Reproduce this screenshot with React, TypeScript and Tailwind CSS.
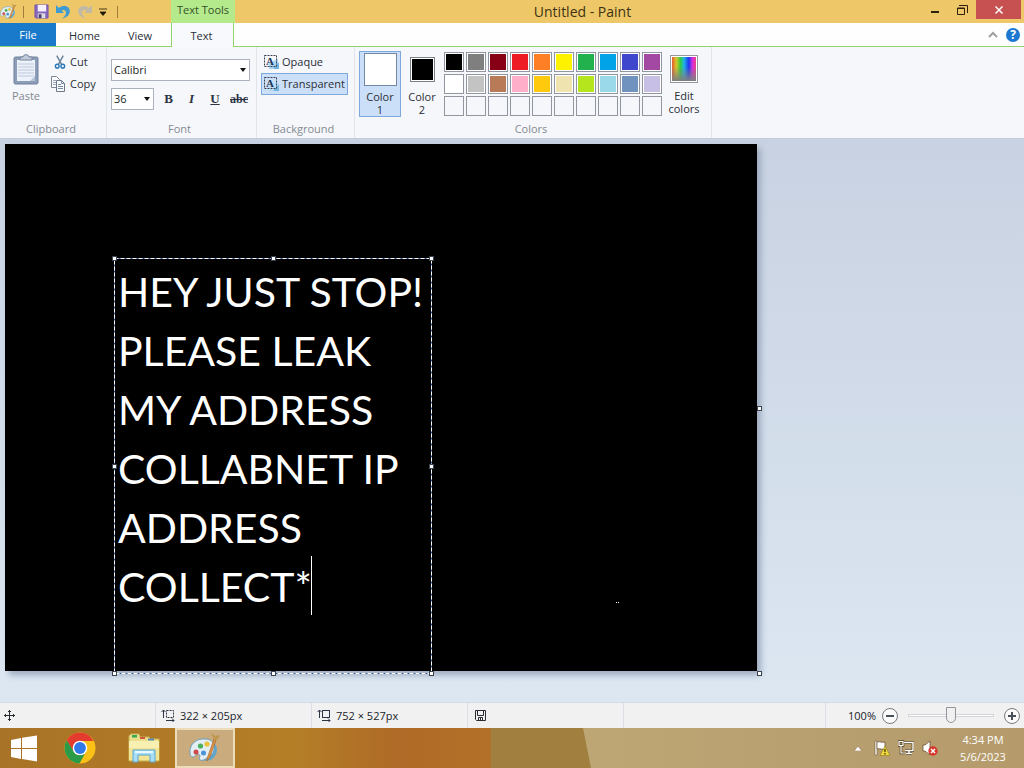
import React from "react";

const swatchRows: string[][] = [
  ["#000000", "#7f7f7f", "#880015", "#ed1c24", "#ff7f27", "#fff200", "#22b14c", "#00a2e8", "#3f48cc", "#a349a4"],
  ["#ffffff", "#c3c3c3", "#b97a57", "#ffaec9", "#ffc90e", "#efe4b0", "#b5e61d", "#99d9ea", "#7092be", "#c8bfe7"],
  ["", "", "", "", "", "", "", "", "", ""],
];

function Palette({ size }: { size: number }) {
  return (
    <svg width={size} height={size} viewBox="0 0 32 32" aria-hidden="true">
      <path d="M22 9c8 4 8 13 0 19l-8 1c8-3 10-11 8-20z" fill="#5fa6cc" />
      <path d="M1 21C0 12 8 6 16 7c8 0 10 5 9 11-1 4-3 6-7 8-3 2-5 3-7 2-2-2 2-5-2-6-2-1-3 3-5 3-2 0-3-2-3-4z" fill="#e3eef3" stroke="#6c9fbe" />
      <circle cx="7" cy="20" r="2.500" fill="#cf4a4a" />
      <circle cx="11.500" cy="14" r="2.600" fill="#4cae5a" />
      <circle cx="18" cy="12" r="2.600" fill="#e8c23a" />
      <circle cx="14.500" cy="21" r="2.500" fill="#4b93d6" />
      <path d="M18 27L25 7l2 1-6 17-3 4z" fill="#df9448" stroke="#a8672b" strokeWidth="0.700" />
      <path d="M25 8c-1-4-2-4-3-7 3 2 4 3 5 3l4-1c-1 2-1 4-4 5z" fill="#bf974e" />
    </svg>
  );
}

function FloppyIcon() {
  return (
    <svg width="15" height="15" viewBox="0 0 16 16" aria-hidden="true">
      <path d="M1 1h14v14H2l-1-1z" fill="#8866bd" stroke="#7455a8" />
      <path d="M4 1h9v7H4z" fill="#f5f0fb" />
      <path d="M4 10h8v5H4z" fill="#d9dde4" />
      <path d="M5 11h3v4H5z" fill="#4a3b6e" />
    </svg>
  );
}

function TurnArrow({ color, flip }: { color: string; flip?: boolean }) {
  return (
    <svg width="16" height="16" viewBox="0 0 16 16" aria-hidden="true" className={flip ? "-scale-x-100" : ""}>
      <path d="M1 1v8h8L6.500 6.500c2-1.300 4.500-.5 4.500 2 0 2.500-1.500 4.200-4 6 4.500-.7 7.800-3.500 7.800-7.500C14.800 2 8 .3 4 4z" fill={color} />
    </svg>
  );
}

function PasteIcon() {
  return (
    <svg width="28" height="32" viewBox="0 0 28 32" aria-hidden="true">
      <rect x="2" y="3" width="24" height="27" rx="1.500" fill="#8c9db8" stroke="#70819f" />
      <path d="M5 6h18v21H5z" fill="#edf1f9" />
      <path d="M6 10h16M6 13h16M6 16h16M6 19h16M6 22h16" stroke="#bdc9de" />
      <path d="M8 6V3h3c0-3 6-3 6 0h3v3z" fill="#c2cbd9" stroke="#74839c" />
      <path d="M18 27l5-5v5z" fill="#b7c5dc" />
    </svg>
  );
}

function CutIcon() {
  return (
    <svg width="12" height="16" viewBox="0 0 13 16" fill="none" aria-hidden="true">
      <path d="M3 1l5.500 10M10 1L4.500 11" stroke="#6f8497" strokeWidth="1.600" />
      <circle cx="3.500" cy="12.500" r="2" stroke="#2878b8" strokeWidth="1.500" />
      <circle cx="9.500" cy="12.500" r="2" stroke="#2878b8" strokeWidth="1.500" />
    </svg>
  );
}

function CopyIcon() {
  return (
    <svg width="16" height="16" viewBox="0 0 16 16" aria-hidden="true">
      <path d="M1.500.5h5l3 3v8h-8z" fill="#fafcff" stroke="#7c8796" />
      <path d="M3 4.500h3M3 6.500h4M3 8.500h4" stroke="#9aa9bd" />
      <path d="M6.500 4.500h5l3 3v8h-8z" fill="#fafcff" stroke="#6d7887" />
      <path d="M11.500 4.500v3h3M8 8.500h3M8 10.500h5M8 12.500h5" stroke="#7590ad" fill="none" />
    </svg>
  );
}

function TextModeIcon({ opaque }: { opaque?: boolean }) {
  return (
    <svg width="17" height="16" viewBox="0 0 17 16" aria-hidden="true">
      <path d="M6 15V9l9-4v10z" fill={opaque ? "#a9d3f3" : "#b9dbf5"} />
      <path d="M10 15l6-7v7z" fill="#6fb4e4" />
      <rect x="1.500" y="1.500" width="12" height="11" fill="none" stroke="#36404e" strokeDasharray="2 1" />
      <text x="3" y="11" fontFamily="Liberation Serif, serif" fontWeight="700" fontSize="11" fill="#1e3557">A</text>
    </svg>
  );
}

function Arrow() {
  return (
    <svg width="6" height="4" viewBox="0 0 6 4" aria-hidden="true" className="pointer-events-none absolute right-1 top-1/2 -translate-y-1/2">
      <path d="M0 0h6L3 4z" fill="#111" />
    </svg>
  );
}

function RibbonGroup({ label, width, children }: { label: string; width: string; children: React.ReactNode }) {
  return (
    <section aria-label={label} className={`flex shrink-0 flex-col border-r border-[#e1e4ea] pb-px ${width}`}>
      <div className="flex flex-1 items-start">{children}</div>
      <div className="h-4 pr-1 text-center leading-4 text-[#858a93]">{label}</div>
    </section>
  );
}

function Handle({ place }: { place: string }) {
  return <span className={`absolute size-[5px] border border-[#3c4350] bg-white ${place}`} />;
}

function SizeIcon({ dashed }: { dashed?: boolean }) {
  return (
    <svg width="14" height="13" viewBox="0 0 14 13" fill="none" stroke="#2d3647" aria-hidden="true">
      <path d="M2.500 9V1M.5 3l2-2 2 2" />
      <rect x="5.500" y="1.500" width="7" height="7" strokeDasharray={dashed ? "2 1" : undefined} />
      <path d="M5 11.500h8M11 9.500l2 2-2 2" />
    </svg>
  );
}

function Chrome() {
  return (
    <svg width="32" height="32" viewBox="0 0 32 32" aria-hidden="true">
      <circle cx="16" cy="16" r="15.500" fill="#fbc116" />
      <path d="M16 .5A15.500 15.500 0 0 0 2.600 8.200L9.800 20 16 9h13.500A15.500 15.500 0 0 0 16 .5z" fill="#e33b2e" />
      <path d="M2.600 8.200A15.500 15.500 0 0 0 15.500 31.500L22 19.500 16 23c-3 0-5-1-6.200-3.500z" fill="#2b9b48" />
      <circle cx="16" cy="16" r="7.300" fill="#fff" />
      <circle cx="16" cy="16" r="5.900" fill="#2f79e8" />
    </svg>
  );
}

function Explorer() {
  return (
    <svg width="32" height="30" viewBox="0 0 32 30" aria-hidden="true">
      <path d="M1 3l2-2h8l1 3h9l1 2h9v22H1z" fill="#eadf8c" stroke="#c9b452" />
      <path d="M4 2h5v2.500H4z" fill="#35a853" />
      <path d="M12 4h5v2h-5z" fill="#d6543d" />
      <path d="M20 5.500h6v2h-6z" fill="#568bb9" />
      <path d="M1 8h30v19H1z" fill="#f8f0b0" />
      <path d="M1 15h30v12H1z" fill="#f1e595" />
      <path d="M5 29V17h22v12h-5v-7H10v7z" fill="#a9dcf5" stroke="#5aa5d3" />
      <path d="M7 19h18" stroke="#e8f8ff" strokeWidth="2" />
    </svg>
  );
}

export default function App() {
  return (
    <div className="flex min-h-screen flex-col overflow-hidden bg-[#dce6f1] font-['Open_Sans','Noto_Sans',sans-serif] text-[11px] leading-4 text-[#2b2f36]">
      <header className="flex h-[23px] items-start bg-[#eec868]">
        <div className="flex h-[23px] w-[171px] items-center">
          <Palette size={17} />
          <span className="ml-1.5 h-3 w-px bg-[#a07c3a]" />
          <button aria-label="Save" className="ml-2.5"><FloppyIcon /></button>
          <button aria-label="Undo" className="ml-1.5"><TurnArrow color="#3c9bd3" /></button>
          <button aria-label="Redo" className="ml-1.5"><TurnArrow color="#c0b9a6" flip /></button>
          <button aria-label="Customize toolbar" className="ml-1.5">
            <svg width="8" height="8" viewBox="0 0 8 8"><path d="M0 1h8M1 4h6L4 7.500z" stroke="#1c1607" fill="#1c1607" strokeWidth="0.800" /></svg>
          </button>
          <span className="ml-2.5 h-3 w-px bg-[#a07c3a]" />
        </div>
        <div className="h-[23px] w-16 bg-[#b4ea8c] pt-0.5 text-center text-[#33502a]">Text Tools</div>
        <h1 className="flex-1 pl-2 text-center text-[14px] leading-[23px] text-[#3d3213]">Untitled - Paint</h1>
        <div className="flex w-[102px] items-start">
          <button aria-label="Minimize" className="flex h-5 w-[26px] items-center justify-center pt-1"><span className="h-0.5 w-2 bg-[#30200c]" /></button>
          <button aria-label="Restore" className="flex h-5 w-7 items-center justify-center">
            <svg width="11" height="10" viewBox="0 0 11 10" fill="none" stroke="#30200c"><path d="M2 .5h8.500V8" /><path d="M.5 3h7v6.500h-7z" /><path d="M.5 3.500h7" /></svg>
          </button>
          <button aria-label="Close" className="flex h-[19px] w-[45px] items-center justify-center bg-[#c75050]">
            <svg width="8" height="8" viewBox="0 0 8 8"><path d="M.5.5l7 7M7.500.5l-7 7" stroke="#fff" strokeWidth="1.500" /></svg>
          </button>
        </div>
      </header>

      <nav aria-label="Ribbon tabs" className="flex h-6 border-b border-[#92d36e] bg-[#fefefe] leading-[18px]">
        <button className="h-[23px] w-14 bg-[#1979ca] text-white">File</button>
        <button className="w-[57px] pt-0.5">Home</button>
        <button className="w-[58px] pr-1 pt-0.5">View</button>
        <button className="h-6 w-[63px] border-x border-[#92d36e] bg-[#f7f9fc] pr-0.5 pt-0.5">Text</button>
        <div className="flex flex-1 items-center justify-end gap-2 pr-1">
          <button aria-label="Collapse ribbon"><svg width="10" height="7" viewBox="0 0 10 7" fill="none"><path d="M1 6l4-4 4 4" stroke="#a0a0a0" strokeWidth="2" /></svg></button>
          <button aria-label="Help" className="size-3.5 rounded-full bg-[#1c78d0] text-xs font-bold leading-[14px] text-white">?</button>
        </div>
      </nav>

      <div className="flex h-[92px] border-b border-[#c3ccda] bg-[#f5f7fb]">
        <RibbonGroup label="Clipboard" width="w-[107px]">
          <button className="ml-2 mt-[7px] flex w-9 flex-col items-center gap-0.5 text-[#82878f]"><PasteIcon />Paste</button>
          <div className="ml-1.5 mt-[7px] flex flex-col items-start gap-1.5">
            <button className="flex h-4 items-center gap-1 pl-1"><CutIcon />Cut</button>
            <button className="flex h-4 items-center gap-1"><CopyIcon />Copy</button>
          </div>
        </RibbonGroup>
        <RibbonGroup label="Font" width="w-[150px]">
          <div className="ml-1 mt-3 flex flex-col gap-[7px]">
            <div className="relative w-[139px]">
              <select aria-label="Font family" className="h-[22px] w-full appearance-none border border-[#abb3c0] bg-white px-0.5 text-[#1c1f24]"><option>Calibri</option></select>
              <Arrow />
            </div>
            <div className="flex items-center">
              <div className="relative w-[43px]">
                <select aria-label="Font size" className="h-[22px] w-full appearance-none border border-[#abb3c0] bg-white px-0.5 text-[#1c1f24]"><option>36</option></select>
                <Arrow />
              </div>
              <div className="ml-[3px] flex font-['Liberation_Serif',serif] text-[13px] font-bold text-[#2c3344]">
                <button aria-label="Bold" className="w-[23px]">B</button>
                <button aria-label="Italic" className="w-[23px] italic">I</button>
                <button aria-label="Underline" className="w-6 underline">U</button>
                <button aria-label="Strikethrough" className="w-6 text-xs line-through">abc</button>
              </div>
            </div>
          </div>
        </RibbonGroup>
        <RibbonGroup label="Background" width="w-[98px]">
          <div className="ml-1 mt-1 flex w-[87px] flex-col">
            <button className="flex h-[22px] items-center gap-0.5 border border-transparent pl-px"><TextModeIcon opaque />Opaque</button>
            <button aria-pressed="true" className="flex h-[22px] items-center gap-0.5 border border-[#7ea9dc] bg-[#cbe0f8] pl-px"><TextModeIcon />Transparent</button>
          </div>
        </RibbonGroup>
        <RibbonGroup label="Colors" width="w-[357px]">
          <button aria-pressed="true" className="ml-1 mt-1 flex h-[66px] w-[42px] flex-col items-center border border-[#7ea9dc] bg-[#cbe0f8] pt-px leading-[13px]">
            <span className="mb-1 size-[33px] border border-[#7187a5] bg-white" />Color<br />1
          </button>
          <button className="mt-1 flex h-[66px] w-[42px] flex-col items-center pt-1.5 leading-[13px]">
            <span className="mb-2 size-[25px] border border-[#7b7f86] bg-white p-px"><span className="block size-full bg-black" /></span>Color<br />2
          </button>
          <div className="ml-px mt-[5px] flex flex-col gap-0.5">
            {swatchRows.map((row, r) => (
              <div key={r} className="flex gap-0.5">
                {row.map((color, c) => (
                  <button key={c} aria-label={color || "Empty color"} className="size-5 border border-[#9196a0]">
                    {color && <span className="block size-[18px] border border-white" style={{ backgroundColor: color }} />}
                  </button>
                ))}
              </div>
            ))}
          </div>
          <button className="ml-0.5 mt-1 flex w-10 flex-col items-center pt-1 leading-[13px]">
            <span className="mb-1.5 size-7 border border-[#94979c] bg-white p-px">
              <svg width="24" height="24" viewBox="0 0 22 22" aria-hidden="true">
                <defs>
                  <linearGradient id="hue"><stop offset="0" stopColor="#e85a31" /><stop offset=".18" stopColor="#d7c629" /><stop offset=".35" stopColor="#32cd40" /><stop offset=".5" stopColor="#20b4e5" /><stop offset=".7" stopColor="#1e35ee" /><stop offset=".85" stopColor="#d52bdf" /><stop offset="1" stopColor="#eb3f86" /></linearGradient>
                  <linearGradient id="fade" x2="0" y2="1"><stop offset=".4" stopColor="#808080" stopOpacity="0" /><stop offset="1" stopColor="#808080" /></linearGradient>
                </defs>
                <path d="M0 0h22v22H0z" fill="url(#hue)" /><path d="M0 0h22v22H0z" fill="url(#fade)" />
              </svg>
            </span>
            Edit<br />colors
          </button>
        </RibbonGroup>
      </div>

      <main className="flex flex-1 items-start bg-linear-to-b from-[#c8d2e2] to-[#dce7f2] px-[5px] pb-7 pt-[5px]">
        <div className="relative h-[527px] w-[752px] shrink-0 bg-black shadow-[4px_4px_6px_#9eacc0]">
          <div className="absolute left-[109px] top-[114px] h-[416px] w-[318px]">
            <svg width="318" height="416" className="absolute inset-0" fill="none" aria-hidden="true">
              <rect x="0.500" y="0.500" width="317" height="415" stroke="#33568f" />
              <rect x="0.500" y="0.500" width="317" height="415" stroke="#fff" strokeDasharray="4 2" />
            </svg>
            <textarea
              aria-label="Canvas text"
              spellCheck={false}
              className="relative block size-full resize-none overflow-hidden whitespace-pre bg-transparent pl-1 pt-1 font-['Lato','Noto_Sans',sans-serif] text-[41px] leading-[59px] text-white outline-none"
              defaultValue={"HEY JUST STOP!\nPLEASE LEAK\nMY ADDRESS\nCOLLABNET IP\nADDRESS\nCOLLECT*"}
            />
            <span className="absolute left-[197px] top-[298px] h-[59px] w-px bg-white" />
            <Handle place="-left-0.5 -top-0.5" />
            <Handle place="left-[157px] -top-0.5" />
            <Handle place="-right-0.5 -top-0.5" />
            <Handle place="-left-0.5 top-[206px]" />
            <Handle place="-right-0.5 top-[206px]" />
            <Handle place="-left-0.5 -bottom-0.5" />
            <Handle place="left-[157px] -bottom-0.5" />
            <Handle place="-right-0.5 -bottom-0.5" />
          </div>
          <span className="absolute left-[611px] top-[458px] w-[3px] border-t border-dotted border-white" />
          <Handle place="-right-[5px] top-[262px]" />
          <Handle place="-bottom-[5px] -right-[5px]" />
        </div>
      </main>

      <div className="flex h-[26px] items-stretch border-t border-[#d3dbe6] bg-[#f1f1f1] text-[#20242b]">
        <div className="flex w-[156px] items-center border-r border-[#dcdfe5] pl-1">
          <svg width="11" height="11" viewBox="0 0 11 11" fill="none" stroke="#272c35" aria-label="Cursor position"><path d="M5.500 0v11M0 5.500h11M4 2l1.500-1.500L7 2M4 9l1.500 1.500L7 9M2 4L.5 5.500 2 7M9 4l1.500 1.500L9 7" /></svg>
        </div>
        <div className="flex w-[156px] items-center gap-[5px] border-r border-[#dcdfe5] pl-[5px]"><SizeIcon dashed />322 × 205px</div>
        <div className="flex w-[156px] items-center gap-[5px] border-r border-[#dcdfe5] pl-[5px]"><SizeIcon />752 × 527px</div>
        <div className="flex w-[156px] items-center border-r border-[#dcdfe5] pl-[7px]">
          <svg width="11" height="11" viewBox="0 0 11 11" fill="none" stroke="#272c35" aria-label="Disk size"><path d="M.5.5h10v10h-9l-1-1zM2.500.5v5h6v-5M3.500 10V7.500h4V10M5.500 8v2" /></svg>
        </div>
        <div className="flex-1 border-r border-[#dcdfe5]" />
        <div className="flex w-[198px] items-center justify-end pr-1">
          <label htmlFor="zoom">100%</label>
          <button aria-label="Zoom out" className="ml-1.5 flex size-4 items-center justify-center rounded-full border border-[#777b80] bg-[#fafafa]"><span className="h-0.5 w-2 bg-[#4a4e55]" /></button>
          <input id="zoom" type="range" defaultValue="50" className="mx-2.5 h-4 w-[86px] appearance-none bg-transparent [&::-webkit-slider-runnable-track]:h-[3px] [&::-webkit-slider-runnable-track]:border [&::-webkit-slider-runnable-track]:border-[#d1d3d6] [&::-webkit-slider-runnable-track]:bg-white [&::-webkit-slider-thumb]:-mt-2 [&::-webkit-slider-thumb]:h-4 [&::-webkit-slider-thumb]:w-2.5 [&::-webkit-slider-thumb]:appearance-none [&::-webkit-slider-thumb]:rounded-b-[5px] [&::-webkit-slider-thumb]:border [&::-webkit-slider-thumb]:border-[#92969c] [&::-webkit-slider-thumb]:bg-[#f0f0f0]" />
          <button aria-label="Zoom in" className="flex size-4 items-center justify-center rounded-full border border-[#777b80] bg-[#fafafa]">
            <svg width="8" height="8" viewBox="0 0 8 8"><path d="M4 0v8M0 4h8" stroke="#4a4e55" strokeWidth="2" /></svg>
          </button>
        </div>
      </div>

      <footer className="relative flex h-10 items-center bg-[#b4792a]">
        <svg className="absolute inset-0 size-full" viewBox="0 0 1024 40" preserveAspectRatio="none" aria-hidden="true">
          <defs>
            <linearGradient id="wood"><stop offset="0" stopColor="#a97327" /><stop offset=".6" stopColor="#b47e27" /><stop offset=".8" stopColor="#af6b27" /><stop offset="1" stopColor="#b37028" /></linearGradient>
            <linearGradient id="sand"><stop offset="0" stopColor="#bda574" /><stop offset="1" stopColor="#b59b6c" /></linearGradient>
          </defs>
          <path d="M0 0h492v40H0z" fill="url(#wood)" />
          <path d="M491 0h100l6 40H491z" fill="#a07f3f" />
          <path d="M583 0h441v40H591z" fill="url(#sand)" />
        </svg>
        <div className="relative flex h-full items-center">
          <button aria-label="Start" className="flex w-12 justify-center">
            <svg width="28" height="27" viewBox="0 0 28 27"><path d="M1 5l10-2v10H1zM12 2.800L27 .5V13H12zM1 14h10v10L1 22zM12 14h15v12.500L12 24z" fill="#fff" /></svg>
          </button>
          <button aria-label="Chrome" className="flex w-16 justify-center"><Chrome /></button>
          <button aria-label="File Explorer" className="flex w-[63px] justify-center"><Explorer /></button>
          <button aria-label="Paint" className="flex h-10 w-[60px] items-center justify-center border-2 border-[#ecdcba] bg-[#c9ab7d]"><Palette size={32} /></button>
        </div>
        <div className="relative ml-auto flex items-center">
          <button aria-label="Show hidden icons" className="mr-3"><svg width="8" height="5" viewBox="0 0 8 5"><path d="M4 0l4 5H0z" fill="#fff" stroke="#79613b" strokeWidth="0.500" /></svg></button>
          <svg className="mr-2" width="16" height="16" viewBox="0 0 16 16" aria-label="Action Center">
            <path d="M1 1h2v14H1z" fill="#fff" stroke="#5b4425" strokeWidth="0.500" /><path d="M3 2c3-1 4 1 8 0v7c-3 1-5-1-8 0z" fill="#fff" stroke="#5b4425" strokeWidth="0.700" />
            <path d="M11 6l5 9.500H6z" fill="#f1d83b" stroke="#8b791e" strokeWidth="0.600" /><path d="M11 9v3M11 13v1.500" stroke="#433909" strokeWidth="1.300" />
          </svg>
          <svg className="mr-2" width="16" height="16" viewBox="0 0 16 16" fill="none" aria-label="Network">
            <path d="M6 2.500h9v8H7M8 13.500h6M11 11v2" stroke="#52401f" strokeWidth="2.800" /><path d="M1 1.500h4v4H1zM3 6v7h4" stroke="#52401f" strokeWidth="2.600" />
            <path d="M6 2.500h9v8H7M8 13.500h6M11 11v2" stroke="#fff" strokeWidth="1.400" /><path d="M1 1.500h4v4H1zM3 6v7h4" stroke="#fff" strokeWidth="1.200" />
          </svg>
          <svg className="mr-5" width="16" height="16" viewBox="0 0 16 16" aria-label="Muted">
            <path d="M1 5h2l5-4v14l-5-4H1z" fill="#fff" stroke="#5b4425" strokeWidth="0.700" />
            <circle cx="11" cy="11" r="4.700" fill="#d7362c" /><path d="M9 9l4 4M13 9l-4 4" stroke="#fff" strokeWidth="1.500" />
          </svg>
          <time className="mr-3 w-[54px] pr-1 text-center leading-[17px] text-white">4:34 PM<br />5/6/2023</time>
        </div>
      </footer>
    </div>
  );
}
